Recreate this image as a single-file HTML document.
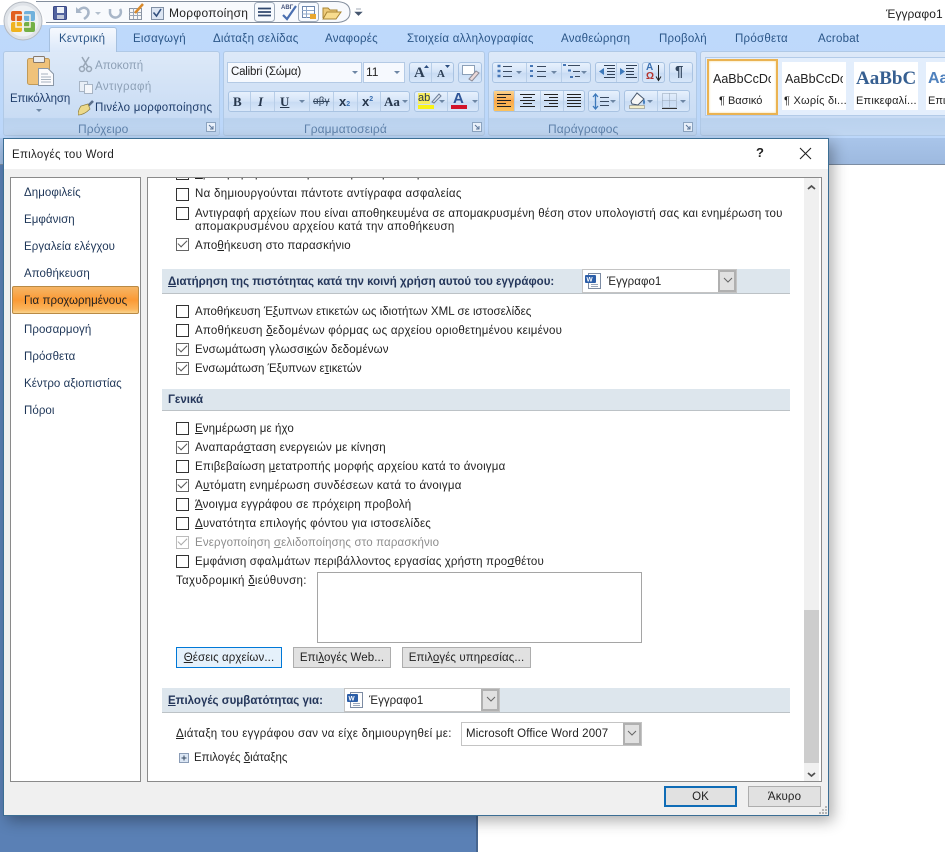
<!DOCTYPE html>
<html lang="el"><head><meta charset="utf-8"><title>Επιλογές του Word</title>
<style>
html,body{margin:0;padding:0;width:945px;height:852px;overflow:hidden;background:#fff}
body{position:relative;font:11.5px "Liberation Sans","DejaVu Sans",sans-serif;color:#222}
div,span,svg,i,b.a{position:absolute}
.t{white-space:nowrap;line-height:14px}
.tab{top:32px;color:#2b5688;font-size:11.5px;letter-spacing:.25px;white-space:nowrap;line-height:14px}
.grp{top:51px;height:85px;background:linear-gradient(#dde9f8,#c9dcf4 79%,#bad2ee 80%,#c0d6f1);border:1px solid #b0c9e6;border-radius:3px;box-sizing:border-box}
.gl{top:122px;color:#5f82ab;font-size:12px;letter-spacing:.1px;white-space:nowrap;line-height:14px}
.box{background:linear-gradient(#e7f1fd,#d3e3f7 50%,#c8dbf3 52%,#d8e7f9);border:1px solid #a9c3e2;border-radius:3px;box-sizing:border-box}
.fld{background:#f6f9fe;border:1px solid #b4cae5;box-sizing:border-box}
.sep{width:1px;background:#b8cee8}
.ar{width:0;height:0;border:3px solid transparent;border-top:3px solid #6d86a4;border-bottom:0}
.rt{color:#1f3d6b;font-size:11.5px;letter-spacing:.26px;white-space:nowrap;line-height:14px}
.dis{color:#8da0b6}
.st{background:#fff;overflow:hidden}
.st span{white-space:nowrap;line-height:14px}
.cb{width:11px;height:11px;border:1px solid #333;background:#fff;left:176px}
.cb.c{border-color:#666}
.cb.c::after{content:"";position:absolute;left:1px;top:1px;width:8px;height:4px;border-left:1px solid #555;border-bottom:1px solid #555;transform:rotate(-45deg)}
.cb.d{border-color:#bbb}.cb.d::after{border-color:#aaa}
.l{left:195px;font-size:11.5px;color:#222;white-space:nowrap;line-height:14px;letter-spacing:.15px}
.nav{left:24px;font-size:11.5px;color:#1d3557;white-space:nowrap;line-height:14px;letter-spacing:.06px}
.hd{left:162px;width:628px;background:#dde6ed;border-bottom:1px solid #bcc2c6;box-sizing:border-box}
.hd b{position:absolute;left:6px;font-size:11.5px;color:#24365a;white-space:nowrap;line-height:14px;letter-spacing:0}
.btn{background:#e1e1e1;border:1px solid #adadad;box-sizing:border-box;text-align:center;font-size:11.5px;color:#222;white-space:nowrap;letter-spacing:.1px}
.combo{background:#fff;border:1px solid #c4c4c4;box-sizing:border-box}
.cdd{top:0;bottom:0;right:0;width:18px;background:#e1e1e1;border:2px solid #b0b0b0;box-sizing:border-box}
</style></head><body>

<!-- Title area -->
<div class="t" style="left:886px;top:7px;font-size:12px;color:#222;letter-spacing:.05px">Έγγραφο1</div>

<!-- Ribbon background -->
<div style="left:0;top:25px;width:945px;height:113px;background:linear-gradient(#bed9fb,#bcd7fa)"></div>
<div style="left:0;top:138px;width:945px;height:27px;background:linear-gradient(#a9c5ea,#9db9df);border-bottom:1px solid #7c8da3;box-sizing:border-box"></div>
<div style="left:0;top:165px;width:478px;height:687px;background:#5a80b5"></div>
<div style="left:476px;top:165px;width:2px;height:687px;background:#476690"></div>

<!-- QAT -->
<svg style="left:0;top:0" width="370" height="50">
<path d="M36 1.500 H335 Q350 1.500 350 12 Q350 22.500 335 22.500 H46" fill="#f8fafd" stroke="#848f9e"/>
<circle cx="23" cy="21" r="19" fill="#dfe3e8" stroke="#b4bac2"/>
<circle cx="23" cy="21" r="15.500" fill="#eef1f4"/>
<rect x="11" y="11" width="11" height="10" rx="2" fill="#e2601f"/><rect x="24" y="11" width="11" height="10" rx="2" fill="#6fb1dc"/>
<rect x="11" y="22" width="11" height="10" rx="2" fill="#efb320"/><rect x="24" y="22" width="11" height="10" rx="2" fill="#74b046"/>
<rect x="16" y="15" width="14" height="12" fill="none" stroke="#f6f1e3" stroke-width="1.500"/>
<rect x="53.500" y="6.500" width="13" height="13" rx="1" fill="#52639f" stroke="#3a4886"/><rect x="57" y="7" width="7" height="6" fill="#eef2f8"/><rect x="57" y="15" width="7" height="4" fill="#c2c9da"/>
<path d="M78 11 Q84 5 88 10 Q90 15 84 19" fill="none" stroke="#a8b6c8" stroke-width="2.500"/><path d="M76 7 V13 H82Z" fill="#a8b6c8"/>
<path d="M95 12 h6 l-3 3z" fill="#b4c0ce"/>
<path d="M110 9 V13 A5.500 5.500 0 1 0 120 9" fill="none" stroke="#a8b6c8" stroke-width="2.500"/>
<rect x="129.500" y="8.500" width="12" height="11" fill="#f7f7f7" stroke="#8a94a3"/><path d="M129 12.500h12M133.500 8v11M137.500 8v11M129 15.500h12" stroke="#9aa6b6"/><path d="M135 13 L143 4" stroke="#d98a2b" stroke-width="2.500"/>
<rect x="151.500" y="7.500" width="12" height="12" fill="#dde6f3" stroke="#8190a5"/><path d="M153.500 12.500 L156.500 16 L161 9" fill="none" stroke="#33507d" stroke-width="1.600"/>
<rect x="254.500" y="2.500" width="20" height="19" rx="3" fill="#f7fafe" stroke="#9fabba"/><path d="M258 8.500h13M258 12h13M258 15.500h13" stroke="#31486e" stroke-width="1.700"/>
<text x="281" y="9" font-size="6" font-weight="bold" fill="#43527a" font-family="Liberation Sans">ABΓ</text>
<path d="M283 15 L287 19 L296 6" fill="none" stroke="#4a6fb0" stroke-width="2.200"/>
<rect x="298.500" y="2.500" width="20" height="19" rx="3" fill="#f7fafe" stroke="#9fabba"/><rect x="302.500" y="6.500" width="12" height="11" fill="#fff" stroke="#6d87ad"/><path d="M302 10.500h12M302 14h12M306.500 7v11" stroke="#8ea7c9"/><rect x="310" y="14" width="6" height="5" fill="#e9a72e"/>
<path d="M323 18 V8 h5 l2 2 h7 v3" fill="#eecb7a" stroke="#a98534"/><path d="M323 19 L327 12 H341 L336 19Z" fill="#f8dc8e" stroke="#a98534"/>
<path d="M356 9h5M355 12h7l-3.500 3.500z" fill="#45566e" stroke="#45566e" stroke-width=".6"/>
</svg>
<div class="t" style="left:169px;top:6px;font-size:12px;letter-spacing:.3px;color:#222">Μορφοποίηση</div>

<!-- Tabs -->
<div style="left:49px;top:27px;width:68px;height:25px;background:linear-gradient(#f6f9fe,#dbe8f9);border:1px solid #a6c0df;border-bottom:0;border-radius:3px 3px 0 0;box-sizing:border-box;z-index:2"></div>
<span class="tab" style="left:59px;z-index:3">Κεντρική</span>
<span class="tab" style="left:133px">Εισαγωγή</span>
<span class="tab" style="left:213px">Διάταξη σελίδας</span>
<span class="tab" style="left:325px">Αναφορές</span>
<span class="tab" style="left:407px">Στοιχεία αλληλογραφίας</span>
<span class="tab" style="left:561px">Αναθεώρηση</span>
<span class="tab" style="left:659px">Προβολή</span>
<span class="tab" style="left:735px">Πρόσθετα</span>
<span class="tab" style="left:818px">Acrobat</span>

<!-- Groups -->
<div class="grp" style="left:3px;width:217px"></div>
<div class="grp" style="left:223px;width:262px"></div>
<div class="grp" style="left:488px;width:209px"></div>
<div class="grp" style="left:700px;width:250px"></div>

<!-- Clipboard -->
<svg style="left:24px;top:54px" width="34" height="34"><rect x="3.500" y="4.500" width="22" height="26" rx="2" fill="#efc27a" stroke="#c09a58"/><rect x="9.500" y="2.500" width="11" height="6" rx="1" fill="#e9edf2" stroke="#88796a"/><path d="M14.500 14.500 H24 L29.500 20 V31.500 H14.500Z" fill="#fbfbfd" stroke="#8b98a8"/><path d="M17 20h7M17 23h10M17 25.500h10M17 28h10" stroke="#a7b2bf"/></svg>
<span class="rt" style="left:10px;top:92px;letter-spacing:-.12px">Επικόλληση</span>
<i class="ar" style="left:36px;top:109px"></i>
<svg style="left:78px;top:56px" width="16" height="62"><path d="M4 1 L10 11M11 1 L5 11" stroke="#98a6b6" stroke-width="1.500"/><circle cx="4" cy="13" r="2.500" fill="none" stroke="#98a6b6" stroke-width="1.500"/><circle cx="11" cy="13" r="2.500" fill="none" stroke="#98a6b6" stroke-width="1.500"/>
<rect x="1.500" y="25.500" width="8" height="10" fill="#e8eef6" stroke="#a7b4c4"/><rect x="6.500" y="28.500" width="8" height="9" fill="#f4f6fa" stroke="#a7b4c4"/>
<path d="M15 45 L9 51" stroke="#5b6f8c" stroke-width="2.600"/><path d="M10 48 L3 50 Q0 54 0 59 Q6 59 12 53Z" fill="#ecd98a" stroke="#8c7c3d" stroke-width=".7"/></svg>
<span class="rt dis" style="left:95px;top:59px;letter-spacing:.02px">Αποκοπή</span>
<span class="rt dis" style="left:95px;top:80px;letter-spacing:.4px">Αντιγραφή</span>
<span class="rt" style="left:95px;top:101px">Πινέλο μορφοποίησης</span>
<span class="gl" style="left:78px">Πρόχειρο</span>
<svg style="left:206px;top:122px" width="10" height="10"><rect x=".5" y=".5" width="9" height="9" fill="#e8f0fa" stroke="#8ca4c0"/><path d="M3 3L7 7M7 4V7H4" stroke="#5c7699" fill="none"/></svg>

<!-- Font -->
<div class="fld" style="left:227px;top:62px;width:135px;height:21px"></div>
<span class="t" style="left:231px;top:65px;font-size:11.500px;letter-spacing:-.2px;color:#222">Calibri (Σώμα)</span>
<i class="ar" style="left:352px;top:71px"></i>
<div class="fld" style="left:363px;top:62px;width:42px;height:21px"></div>
<span class="t" style="left:366px;top:65px;font-size:12px">11</span>
<i class="ar" style="left:394px;top:71px"></i>
<div class="box" style="left:409px;top:62px;width:45px;height:21px"></div>
<div class="sep" style="left:431px;top:63px;height:19px"></div>
<span class="t" style="left:414px;top:66px;font:bold 15px/14px 'Liberation Serif',serif;color:#2c3e55">A</span>
<span class="t" style="left:437px;top:67px;font:bold 11px/14px 'Liberation Serif',serif;color:#2c3e55">A</span>
<svg style="left:424px;top:62px" width="30" height="10"><path d="M0 6 L2.500 3 L5 6z M21 3 H26 L23.500 6z" fill="#2c4d7f"/></svg>
<div class="box" style="left:458px;top:62px;width:24px;height:21px"></div>
<svg style="left:460px;top:63px" width="20" height="19"><rect x="2.500" y="2.500" width="12" height="9" fill="#fff" stroke="#8ca0b8"/><path d="M9 16 L16 8 L19 10 L12 18Z" fill="#ead8d8" stroke="#8a8a96"/></svg>

<div class="box" style="left:228px;top:91px;width:182px;height:21px"></div>
<div class="sep" style="left:250px;top:92px;height:19px"></div><div class="sep" style="left:274px;top:92px;height:19px"></div><div class="sep" style="left:309px;top:92px;height:19px"></div><div class="sep" style="left:333px;top:92px;height:19px"></div><div class="sep" style="left:357px;top:92px;height:19px"></div><div class="sep" style="left:380px;top:92px;height:19px"></div>
<span class="t" style="left:233px;top:95px;font:bold 13px/14px 'Liberation Serif',serif;color:#26364c">B</span>
<span class="t" style="left:258px;top:95px;font:italic bold 13px/14px 'Liberation Serif',serif;color:#26364c">I</span>
<span class="t" style="left:280px;top:95px;font:bold 13px/14px 'Liberation Serif',serif;color:#26364c;text-decoration:underline">U</span>
<i class="ar" style="left:299px;top:100px"></i>
<span class="t" style="left:313px;top:95px;font-size:10px;color:#33465e;text-decoration:line-through">αβγ</span>
<span class="t" style="left:339px;top:95px;font:bold 13px/14px 'Liberation Sans',sans-serif;color:#26364c">x<span style="position:static;font-size:7px;color:#3a6fb0">2</span></span>
<span class="t" style="left:362px;top:95px;font:bold 13px/14px 'Liberation Sans',sans-serif;color:#26364c">x<span style="position:relative;top:-5px;font-size:7px;color:#3a6fb0">2</span></span>
<span class="t" style="left:384px;top:95px;font:bold 13px/14px 'Liberation Serif',serif;color:#26364c">Aa</span>
<i class="ar" style="left:402px;top:100px"></i>
<div class="box" style="left:414px;top:91px;width:65px;height:21px"></div>
<div class="sep" style="left:447px;top:92px;height:19px"></div>
<span class="t" style="left:418px;top:93px;font-size:11px;line-height:11px;color:#26364c;background:#f7ee60;height:11px">ab</span>
<svg style="left:430px;top:92px" width="12" height="13"><path d="M2 10 L9 2 L11 4 L4 11Z" fill="#dfe6f0" stroke="#6d7f99"/></svg>
<div style="left:418px;top:105px;width:16px;height:4px;background:#f8f218"></div>
<i class="ar" style="left:439px;top:100px"></i>
<span class="t" style="left:453px;top:92px;font:bold 15px/14px 'Liberation Sans',sans-serif;color:#2f5597">A</span>
<div style="left:451px;top:105px;width:16px;height:4px;background:#d2132a"></div>
<i class="ar" style="left:472px;top:100px"></i>
<span class="gl" style="left:304px">Γραμματοσειρά</span>
<svg style="left:472px;top:122px" width="10" height="10"><rect x=".5" y=".5" width="9" height="9" fill="#e8f0fa" stroke="#8ca4c0"/><path d="M3 3L7 7M7 4V7H4" stroke="#5c7699" fill="none"/></svg>

<!-- Paragraph -->
<div class="box" style="left:492px;top:62px;width:99px;height:21px"></div>
<div class="box" style="left:595px;top:62px;width:44px;height:21px"></div>
<div class="box" style="left:642px;top:62px;width:23px;height:21px"></div>
<div class="box" style="left:669px;top:62px;width:24px;height:21px"></div>
<div class="box" style="left:493px;top:90px;width:92px;height:22px"></div>
<div class="box" style="left:588px;top:90px;width:32px;height:22px"></div>
<div class="box" style="left:624px;top:90px;width:66px;height:22px"></div>
<div style="left:494px;top:91px;width:20px;height:20px;background:linear-gradient(#fbd38e,#f9a94c 50%,#fbc25e);border-right:1px solid #cf9a45"></div>
<svg style="left:488px;top:55px" width="215" height="65" fill="none">
<path d="M9.500 11h3M9.500 16h3M9.500 21h3" stroke="#4676b5" stroke-width="2.500"/><path d="M15 11.500h9M15 16.500h9M15 21.500h9" stroke="#3a4a60"/>
<path d="M42 11h3M42 16h3M42 21h3" stroke="#4676b5" stroke-width="2"/><path d="M49 11.500h9M49 16.500h9M49 21.500h9" stroke="#3a4a60"/>
<path d="M75 10h3M80 15.500h3M82 22h3" stroke="#4676b5" stroke-width="2"/><path d="M80 10.500h12M85 16.500h7M87 21.500h5" stroke="#3a4a60"/>
<path d="M116 10.500h11M119 13.500h8M119 16.500h8M119 19.500h8M116 22.500h11" stroke="#2f3f55"/><path d="M111 16.500l5-3.500v7z" fill="#3d79bb"/>
<path d="M138 10.500h11M138 13.500h8M138 16.500h8M138 19.500h8M138 22.500h11" stroke="#2f3f55"/><path d="M137 16.500l-5-3.500v7z" fill="#3d79bb"/>
<path d="M170.500 10v15M168 21.500l2.500 4 2.500-4" stroke="#222"/>
<path d="M9 39.500h14M9 42.500h9M9 45.500h14M9 48.500h9M9 51.500h14" stroke="#222"/>
<path d="M32 39.500h15M35 42.500h9M32 45.500h15M35 48.500h9M32 51.500h15" stroke="#222"/>
<path d="M56 39.500h14M61 42.500h9M56 45.500h14M61 48.500h9M56 51.500h14" stroke="#222"/>
<path d="M79 39.500h14M79 42.500h14M79 45.500h14M79 48.500h14M79 51.500h14" stroke="#222"/>
<path d="M107.500 39v15M105 42l2.500-3 2.500 3M105 51l2.500 3 2.500-3" stroke="#3d79bb" stroke-width="1.300"/>
<path d="M112 42.500h9M112 46.500h9M112 50.500h9" stroke="#3a4a60"/>
<path d="M143 46 l6-8 7 6-6 6-6-1z" fill="#f7f7f7" stroke="#46566c"/><path d="M156 44q2 3 0 6q-2-3 0-6z" fill="#3d79bb"/><rect x="141.500" y="50.500" width="15" height="3" fill="#f3edc9" stroke="#8a8a80" stroke-width=".6"/>
<path d="M174.500 38.500h14v14h-14z M181.500 38.500v14M174.500 45.500h14" stroke="#93a3b6" stroke-dasharray="1 1"/><path d="M174 53.500h15" stroke="#333"/>
</svg>
<i class="ar" style="left:516px;top:71px"></i><i class="ar" style="left:551px;top:71px"></i><i class="ar" style="left:581px;top:71px"></i>
<i class="ar" style="left:610px;top:100px"></i><i class="ar" style="left:647px;top:100px"></i><i class="ar" style="left:680px;top:100px"></i>
<div class="sep" style="left:526px;top:63px;height:19px"></div><div class="sep" style="left:561px;top:63px;height:19px"></div><div class="sep" style="left:616px;top:63px;height:19px"></div>
<div class="sep" style="left:514px;top:91px;height:20px"></div><div class="sep" style="left:540px;top:91px;height:20px"></div><div class="sep" style="left:563px;top:91px;height:20px"></div><div class="sep" style="left:657px;top:91px;height:20px"></div>
<span class="t" style="left:646px;top:61px;font:bold 10px/14px 'Liberation Sans',sans-serif;color:#3a6fb0">A</span>
<span class="t" style="left:646px;top:70px;font:bold 10px/14px 'Liberation Sans',sans-serif;color:#b5332c">Ω</span>
<span class="t" style="left:675px;top:65px;font:bold 15px/14px 'Liberation Sans',sans-serif;color:#33465e">¶</span>
<span class="gl" style="left:548px">Παράγραφος</span>
<svg style="left:683px;top:122px" width="10" height="10"><rect x=".5" y=".5" width="9" height="9" fill="#e8f0fa" stroke="#8ca4c0"/><path d="M3 3L7 7M7 4V7H4" stroke="#5c7699" fill="none"/></svg>

<!-- Styles -->
<div style="left:705px;top:57px;width:240px;height:59px;background:#e3eefc;border:1px solid #b3cbe8;border-right:0;box-sizing:border-box"></div>
<div class="st" style="left:707px;top:59px;width:71px;height:56px;border:2px solid #eab352;box-sizing:border-box;box-shadow:inset 0 0 2px #f7d88c">
<div style="left:4px;top:10px;width:58px;height:16px;overflow:hidden"><span style="left:0;top:1px;font-size:12.500px;color:#222">AaBbCcDc</span></div><span style="left:10px;top:33px;font-size:11px;color:#222">¶ Βασικό</span></div>
<div class="st" style="left:782px;top:62px;width:64px;height:48px">
<div style="left:3px;top:9px;width:58px;height:16px;overflow:hidden"><span style="left:0;top:1px;font-size:12.500px;color:#222">AaBbCcDc</span></div><span style="left:2px;top:32px;font-size:11px;color:#222;letter-spacing:.25px">¶ Χωρίς δι...</span></div>
<div class="st" style="left:854px;top:62px;width:64px;height:48px">
<div style="left:2px;top:6px;width:59px;height:24px;overflow:hidden"><span style="left:0;top:3px;font:bold 19px/16px 'Liberation Serif',serif;color:#365f91">AaBbCc</span></div><span style="left:2px;top:32px;font-size:11px;color:#222;letter-spacing:.2px">Επικεφαλί...</span></div>
<div class="st" style="left:926px;top:62px;width:19px;height:48px">
<span style="left:2px;top:9px;font:bold 16px/16px 'Liberation Sans',sans-serif;color:#4f81bd">Aa</span><span style="left:2px;top:32px;font-size:11px;color:#222">Επι</span></div>

<!-- Dialog -->
<div style="left:3px;top:138px;width:826px;height:678px;background:#f0f0f0;border:1px solid #3c6e94;box-sizing:border-box;box-shadow:4px 5px 14px rgba(0,0,0,.32)"></div>
<div style="left:4px;top:139px;width:824px;height:30px;background:#fff"></div>
<span class="t" style="left:12px;top:148px;font-size:11.500px;color:#222;letter-spacing:.28px">Επιλογές του Word</span>
<span class="t" style="left:756px;top:146px;font-size:13px;color:#222;font-weight:bold">?</span>
<svg style="left:799px;top:147px" width="13" height="13"><path d="M1 1L12 12M12 1L1 12" stroke="#222" stroke-width="1.100"/></svg>

<!-- left list -->
<div style="left:10px;top:177px;width:131px;height:605px;background:#fff;border:1px solid #8a8a8a;box-sizing:border-box"></div>
<span class="nav" style="top:186px">Δημοφιλείς</span>
<span class="nav" style="top:213px">Εμφάνιση</span>
<span class="nav" style="top:240px">Εργαλεία ελέγχου</span>
<span class="nav" style="top:267px">Αποθήκευση</span>
<div style="left:12px;top:286px;width:127px;height:28px;background:linear-gradient(#f5b566,#fb9a35 50%,#fbb45a 85%,#f9d38c);border:1px solid #b98a45;border-radius:2px;box-sizing:border-box"></div>
<span class="nav" style="top:294px;color:#222">Για προχωρημένους</span>
<span class="nav" style="top:323px">Προσαρμογή</span>
<span class="nav" style="top:350px">Πρόσθετα</span>
<span class="nav" style="top:377px">Κέντρο αξιοπιστίας</span>
<span class="nav" style="top:404px">Πόροι</span>

<!-- right panel -->
<div style="left:147px;top:177px;width:675px;height:605px;background:#fff;border:1px solid #8a8a8a;box-sizing:border-box;overflow:hidden"></div>
<div style="left:148px;top:178px;width:656px;height:3px;overflow:hidden">
 <i class="cb" style="left:28px;top:-11px"></i>
 <span class="l" style="left:47px;top:-11px"><u>Ε</u>ρώτηση πριν από την αποθήκευση του προτύπου Normal.dot</span>
</div>
<!-- scrollbar -->
<div style="left:804px;top:178px;width:15px;height:603px;background:#f0f0f0"></div>
<div style="left:804px;top:610px;width:15px;height:153px;background:#cdcdcd"></div>
<svg style="left:804px;top:178px" width="15" height="603"><path d="M4 11L7.500 8L11 11M4 595L7.500 598L11 595" fill="none" stroke="#505050" stroke-width="1.800"/></svg>

<i class="cb" style="top:188px"></i><span class="l" style="top:187px;letter-spacing:.3px">Να δημιουργούνται πάντοτε αντίγραφα ασφαλείας</span>
<i class="cb" style="top:207px"></i><span class="l" style="top:207px;letter-spacing:.21px">Αντιγραφή αρχείων που είναι αποθηκευμένα σε απομακρυσμένη θέση στον υπολογιστή σας και ενημέρωση του</span>
<span class="l" style="top:220px;letter-spacing:.31px">απομακρυσμένου αρχείου κατά την αποθήκευση</span>
<i class="cb c" style="top:238px"></i><span class="l" style="top:239px;letter-spacing:.19px">Απο<u>θ</u>ήκευση στο παρασκήνιο</span>

<div class="hd" style="top:269px;height:25px"><b style="top:6px"><u>Δ</u>ιατήρηση της πιστότητας κατά την κοινή χρήση αυτού του εγγράφου:</b></div>
<div class="combo" style="left:582px;top:269px;width:155px;height:24px"><div class="cdd"></div></div>
<svg style="left:584px;top:272px" width="18" height="17"><rect x="4.500" y="1.500" width="12" height="15" fill="#fdfdfd" stroke="#7c8ba3"/><path d="M7 12.500h7M7 14.500h7" stroke="#9ba7bb"/><rect x="1" y="3" width="11" height="8" rx="1" fill="#2c5ea8"/><text x="2.500" y="9.500" font-size="6.500" fill="#fff" font-family="Liberation Sans" font-weight="bold">W</text></svg>
<span class="t" style="left:607px;top:275px;font-size:11.500px;color:#222;letter-spacing:.05px">Έγγραφο1</span>
<svg style="left:720px;top:275px" width="16" height="10"><path d="M4 3L8 7L12 3" fill="none" stroke="#666"/></svg>

<i class="cb" style="top:305px"></i><span class="l" style="top:305px;letter-spacing:.03px">Αποθήκευση Έ<u>ξ</u>υπνων ετικετών ως ιδιοτήτων XML σε ιστοσελίδες</span>
<i class="cb" style="top:324px"></i><span class="l" style="top:324px;letter-spacing:.24px">Αποθήκευση <u>δ</u>εδομένων φόρμας ως αρχείου οριοθετημένου κειμένου</span>
<i class="cb c" style="top:343px"></i><span class="l" style="top:343px;letter-spacing:.12px">Ενσωμάτωση γλωσσι<u>κ</u>ών δεδομένων</span>
<i class="cb c" style="top:362px"></i><span class="l" style="top:362px;letter-spacing:-.02px">Ενσωμάτωση Έξυπνων ε<u>τ</u>ικετών</span>

<div class="hd" style="top:389px;height:22px"><b style="top:4px">Γενικά</b></div>

<i class="cb" style="top:422px"></i><span class="l" style="top:422px;letter-spacing:.1px"><u>Ε</u>νημέρωση με ήχο</span>
<i class="cb c" style="top:441px"></i><span class="l" style="top:441px;letter-spacing:.18px">Αναπαρά<u>σ</u>ταση ενεργειών με κίνηση</span>
<i class="cb" style="top:460px"></i><span class="l" style="top:460px;letter-spacing:.19px">Επιβεβαίωση <u>μ</u>ετατροπής μορφής αρχείου κατά το άνοιγμα</span>
<i class="cb c" style="top:479px"></i><span class="l" style="top:479px;letter-spacing:.26px">Α<u>υ</u>τόματη ενημέρωση συνδέσεων κατά το άνοιγμα</span>
<i class="cb" style="top:498px"></i><span class="l" style="top:498px;letter-spacing:.2px"><u>Ά</u>νοιγμα εγγράφου σε πρόχειρη προβολή</span>
<i class="cb" style="top:517px"></i><span class="l" style="top:517px;letter-spacing:.22px"><u>Δ</u>υνατότητα επιλογής φόντου για ιστοσελίδες</span>
<i class="cb c d" style="top:536px"></i><span class="l" style="top:536px;color:#8d8d8d">Ενεργοποίηση <u>σ</u>ελιδοποίησης στο παρασκήνιο</span>
<i class="cb" style="top:555px"></i><span class="l" style="top:555px">Εμφάνιση σφαλμάτων περιβάλλοντος εργασίας χρήστη προ<u>σ</u>θέτου</span>

<span class="l" style="left:176px;top:574px;letter-spacing:.3px">Ταχυδρομική <u>δ</u>ιεύθυνση:</span>
<div style="left:317px;top:572px;width:325px;height:71px;background:#fff;border:1px solid #a5a5a5;box-sizing:border-box"></div>

<div class="btn" style="left:176px;top:647px;width:106px;height:21px;line-height:21px;background:#e5f1fb;border-color:#0078d7"><u>Θ</u>έσεις αρχείων...</div>
<div class="btn" style="left:293px;top:647px;width:98px;height:21px;line-height:21px">Επι<u>λ</u>ογές Web...</div>
<div class="btn" style="left:402px;top:647px;width:129px;height:21px;line-height:21px">Επιλ<u>ο</u>γές υπηρεσίας...</div>

<div class="hd" style="top:688px;height:25px"><b style="top:6px"><u>Ε</u>πιλογές συμβατότητας για:</b></div>
<div class="combo" style="left:344px;top:688px;width:156px;height:24px"><div class="cdd"></div></div>
<svg style="left:346px;top:691px" width="18" height="17"><rect x="4.500" y="1.500" width="12" height="15" fill="#fdfdfd" stroke="#7c8ba3"/><path d="M7 12.500h7M7 14.500h7" stroke="#9ba7bb"/><rect x="1" y="3" width="11" height="8" rx="1" fill="#2c5ea8"/><text x="2.500" y="9.500" font-size="6.500" fill="#fff" font-family="Liberation Sans" font-weight="bold">W</text></svg>
<span class="t" style="left:369px;top:694px;font-size:11.500px;color:#222;letter-spacing:.05px">Έγγραφο1</span>
<svg style="left:483px;top:694px" width="16" height="10"><path d="M4 3L8 7L12 3" fill="none" stroke="#666"/></svg>

<span class="l" style="left:176px;top:727px;letter-spacing:.28px"><u>Δ</u>ιάταξη του εγγράφου σαν να είχε δημιουργηθεί με:</span>
<div class="combo" style="left:461px;top:722px;width:181px;height:24px"><div class="cdd"></div></div>
<span class="t" style="left:466px;top:727px;font-size:11.500px;color:#222;letter-spacing:.13px">Microsoft Office Word 2007</span>
<svg style="left:624px;top:728px" width="16" height="10"><path d="M4 3L8 7L12 3" fill="none" stroke="#666"/></svg>

<svg style="left:179px;top:753px" width="10" height="10"><rect x=".5" y=".5" width="9" height="9" fill="#dbe6f4" stroke="#8a9cb6"/><path d="M2.500 5h5M5 2.500v5" stroke="#33465e"/></svg>
<span class="l" style="left:194px;top:751px;letter-spacing:0">Επιλογές <u>δ</u>ιάταξης</span>

<!-- OK / Cancel -->
<div class="btn" style="left:664px;top:786px;width:73px;height:21px;line-height:19px;border:2px solid #0f6cb6">OK</div>
<div class="btn" style="left:748px;top:786px;width:73px;height:21px;line-height:21px">Άκυρο</div>
<svg style="left:817px;top:804px" width="11" height="11" fill="#b5b5b5"><rect x="8" y="2" width="2" height="2"/><rect x="5" y="5" width="2" height="2"/><rect x="8" y="5" width="2" height="2"/><rect x="2" y="8" width="2" height="2"/><rect x="5" y="8" width="2" height="2"/><rect x="8" y="8" width="2" height="2"/></svg>
</body></html>
